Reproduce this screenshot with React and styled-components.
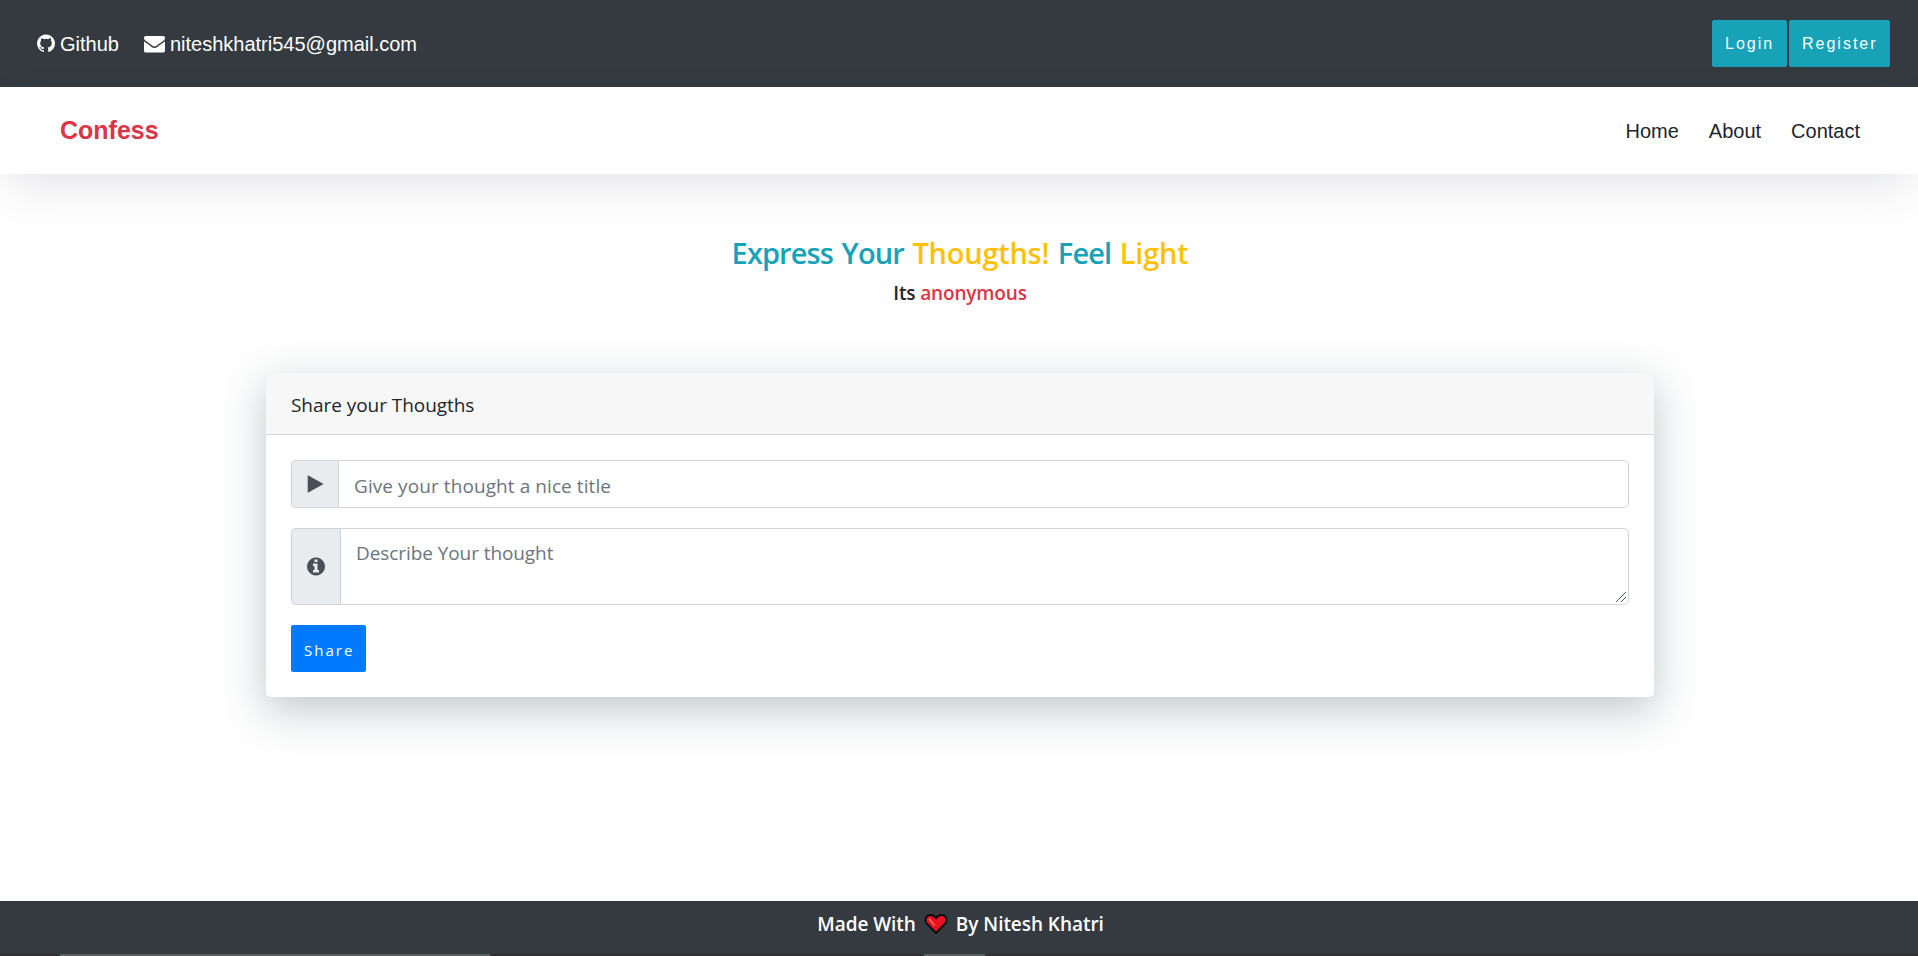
import React from 'react';
import styled, { createGlobalStyle } from 'styled-components';

const GlobalStyle = createGlobalStyle`
  *, *::before, *::after { box-sizing: border-box; }
  html { font-size: 20px; }
  body {
    margin: 0;
    background: #fefefe;
    color: #212529;
    font-family: 'Open Sans', sans-serif;
    line-height: 1.5;
    overflow: hidden;
  }
`;

const Page = styled.div`
  height: 956px;
  display: flex;
  flex-direction: column;
`;

const TopBar = styled.header`
  height: 87px;
  padding: 0 28px 0 37px;
  display: flex;
  align-items: center;
  justify-content: space-between;
  background: #343a40;
  font-family: 'Liberation Sans', sans-serif;
`;

const Contacts = styled.div`
  display: flex;
  gap: 25px;
`;

const ContactLink = styled.a`
  display: flex;
  align-items: center;
  gap: ${({ $gap }) => $gap}px;
  color: #fff;
  font-size: 20px;
`;

const Buttons = styled.div`
  display: flex;
  gap: 2px;
`;

const Button = styled.button`
  height: 47px;
  width: ${({ $width }) => $width}px;
  padding: ${({ $drop }) => $drop || 0}px 0 0 12px;
  border: 1px solid ${({ $color }) => $color};
  border-radius: 2px;
  background: ${({ $color }) => $color};
  color: #fff;
  font-family: inherit;
  font-size: ${({ $size }) => $size || 16}px;
  letter-spacing: 2px;
  text-align: left;
  white-space: nowrap;
`;

const NavBar = styled.nav`
  height: 87px;
  padding: 0 58px 0 60px;
  display: flex;
  align-items: center;
  justify-content: space-between;
  background: #fff;
  box-shadow: 0 16px 46px -8px rgba(60, 70, 85, 0.15);
  font-family: 'Liberation Sans', sans-serif;
`;

const Brand = styled.a`
  color: #dc3545;
  font-size: 25px;
  font-weight: 700;
`;

const NavLinks = styled.div`
  display: flex;
  gap: 30px;
  font-size: 20px;
`;

const Main = styled.main`
  flex: 1;
  padding-left: 2px;
  display: flex;
  flex-direction: column;
  align-items: center;
`;

const Tint = styled.span`
  color: ${({ $color }) => $color};
`;

const Title = styled.h1`
  margin: 61px 0 0;
  color: #17a2b8;
  font-size: 29px;
  font-weight: 600;
  line-height: 36px;
  letter-spacing: -0.9px;
  word-spacing: 2px;
  ${Tint} { letter-spacing: -0.25px; }
`;

const Subtitle = styled.h2`
  margin: 10px 0 0;
  font-size: 19px;
  font-weight: 600;
  line-height: 24px;
  letter-spacing: -0.15px;
`;

const Card = styled.section`
  width: 1388px;
  height: 324px;
  margin-top: 68px;
  border-radius: 5px;
  background: #fff;
  box-shadow: 0 13px 43px rgba(38, 65, 78, 0.29);
`;

const CardHeader = styled.div`
  height: 62px;
  padding: 3px 25px 0;
  display: flex;
  align-items: center;
  border-bottom: 1px solid #d8d8d8;
  border-radius: 5px 5px 0 0;
  background: #f7f7f7;
  font-size: 19px;
  letter-spacing: -0.05px;
`;

const Form = styled.form`
  padding: 25px;
  display: flex;
  flex-direction: column;
  align-items: flex-start;
`;

const Group = styled.div`
  position: relative;
  width: 100%;
  height: ${({ $height }) => $height}px;
  margin-bottom: 20px;
  display: flex;
`;

const Addon = styled.span`
  width: ${({ $width }) => $width}px;
  padding-left: 15px;
  display: flex;
  align-items: center;
  border: 1px solid #ced4da;
  border-right: 0;
  border-radius: 5px 0 0 5px;
  background: #e9ecef;
  color: #495057;
`;

const Field = styled.input`
  flex: 1;
  min-width: 0;
  padding: 9px 15px 5px;
  border: 1px solid #ced4da;
  border-radius: 0 5px 5px 0;
  background: #fff;
  font-family: inherit;
  font-size: 19px;
  line-height: 30px;
  letter-spacing: 0.08px;
  &::placeholder { color: #6c757d; opacity: 1; }
`;

const Area = styled(Field)`
  padding: 9px 15px 6px;
  letter-spacing: -0.08px;
  resize: none;
`;

const Grip = styled.svg`
  position: absolute;
  right: 3px;
  bottom: 3px;
`;

const Footer = styled.footer`
  height: 53px;
  padding: 0 0 7px 3px;
  display: flex;
  align-items: center;
  justify-content: center;
  gap: 8px;
  background: #343a40;
  color: #fff;
  font-size: 19px;
  font-weight: 600;
  letter-spacing: -0.05px;
`;

const BottomStrip = styled.div`
  height: 2px;
  padding-left: 60px;
  display: flex;
  gap: 434px;
  background: #322f33;
`;

const StripItem = styled.div`
  flex: none;
  width: ${({ $width }) => $width}px;
  background: #5d5e60;
`;

const Icon = ({ size = 20, left = 0, width = 1792, d }) => (
  <svg height={size} width={(size * width) / 1792} viewBox={`${left} 0 ${width} 1792`} fill="currentColor" aria-hidden="true">
    <path d={d} />
  </svg>
);

const icons = {
  github: 'M896 128q209 0 385.500 103t279.500 279.500 103 385.500q0 251-146.500 451.500t-378.500 277.500q-27 5-40-7t-13-30q0-3 .5-76.500t.5-134.500q0-97-52-142 57-6 102.500-18t94-39 81-66.500 53-105 20.500-150.500q0-119-79-206 37-91-8-204-28-9-81 11t-92 44l-38 24q-93-26-192-26t-192 26q-16-11-42.500-27t-83.500-38.500-85-13.500q-45 113-8 204-79 87-79 206 0 85 20.500 150t52.500 105 80.500 67 94 39 102.500 18q-39 36-49 103-21 10-45 15t-57 5-65.500-21.500-55.500-62.500q-19-32-48.500-52t-49.500-24l-20-3q-21 0-29 4.500t-5 11.500 9 14 13 12l7 5q22 10 43.500 38t31.500 51l10 23q13 38 44 61.500t67 30 69.500 7 55.500-3.500l23-4q0 38 .5 88.500t.5 54.500q0 18-13 30t-40 7q-232-77-378.500-277.500t-146.500-451.500q0-209 103-385.500t279.500-279.500 385.500-103z',
  envelope: 'M1792 710v794q0 66-47 113t-113 47h-1472q-66 0-113-47t-47-113v-794q44 49 101 87 362 246 497 345 57 42 92.500 65.500t94.500 48 110 24.500h2q51 0 110-24.500t94.500-48 92.500-65.500q170-123 498-345 57-39 100-87zm0-294q0 79-49 151t-122 123q-376 261-468 325-10 7-42.500 31t-54 38.500-52 32.500-57.500 27-50 9h-2q-23 0-50-9t-57.500-27-52-32.500-54-38.500-42.500-31q-91-64-262-182.500t-205-142.500q-62-42-117-115.500t-55-136.500q0-78 41.500-130t118.500-52h1472q65 0 112.500 47t47.500 113z',
  play: 'M1576 927l-1328 738q-23 13-39.500 3t-16.500-36v-1472q0-26 16.500-36t39.500 3l1328 738q23 13 23 31t-23 31z',
  info: 'M1152 1376v-160q0-14-9-23t-23-9h-96v-512q0-14-9-23t-23-9h-320q-14 0-23 9t-9 23v160q0 14 9 23t23 9h96v320h-96q-14 0-23 9t-9 23v160q0 14 9 23t23 9h448q14 0 23-9t9-23zm-128-896v-160q0-14-9-23t-23-9h-192q-14 0-23 9t-9 23v160q0 14 9 23t23 9h192q14 0 23-9t9-23zm640 416q0 209-103 385.500t-279.500 279.500-385.500 103-385.500-103-279.500-279.500-103-385.500 103-385.500 279.500-279.500 385.500-103 385.500 103 279.500 279.500 103 385.500z',
};

const Heart = () => (
  <svg width="24" height="22" viewBox="0 0 24 22">
    <path d="M12 20 2.7 10.3C.2 6.8 2.1 2 6.3 2 9 2 11 3.4 12 5.3 13 3.4 15 2 17.7 2c4.2 0 6.1 4.8 3.6 8.3Z" fill="#e81224" stroke="#080b0d" strokeWidth="1.9" strokeLinejoin="round" />
    <path d="m5.5 6.2 4.5 5.6" stroke="#f4694f" strokeWidth="1.8" strokeLinecap="round" />
  </svg>
);

export default function App() {
  return (
    <Page>
      <GlobalStyle />
      <TopBar>
        <Contacts>
          <ContactLink $gap={5}><Icon size={21} left={128} width={1536} d={icons.github} />Github</ContactLink>
          <ContactLink $gap={5}><Icon size={21} d={icons.envelope} />niteshkhatri545@gmail.com</ContactLink>
        </Contacts>
        <Buttons>
          <Button $color="#17a2b8" $width={75}>Login</Button>
          <Button $color="#17a2b8" $width={101}>Register</Button>
        </Buttons>
      </TopBar>
      <NavBar>
        <Brand>Confess</Brand>
        <NavLinks><a>Home</a><a>About</a><a>Contact</a></NavLinks>
      </NavBar>
      <Main>
        <Title>Express Your <Tint $color="#ffc107">Thougths!</Tint> Feel <Tint $color="#ffc107">Light</Tint></Title>
        <Subtitle>Its <Tint $color="#dc3545">anonymous</Tint></Subtitle>
        <Card>
          <CardHeader>Share your Thougths</CardHeader>
          <Form>
            <Group $height={48}>
              <Addon $width={47}><Icon size={20} left={128} width={1536} d={icons.play} /></Addon>
              <Field placeholder="Give your thought a nice title" />
            </Group>
            <Group $height={77}>
              <Addon $width={49}><Icon size={21} left={128} width={1536} d={icons.info} /></Addon>
              <Area as="textarea" placeholder="Describe Your thought" />
              <Grip width="10" height="10" viewBox="0 0 10 10" shapeRendering="crispEdges" stroke="#55585b" strokeWidth="1">
                <path d="M0 10 10 0M5 10l5-5" />
              </Grip>
            </Group>
            <Button type="button" $color="#007bff" $width={75} $drop={3} $size={15}>Share</Button>
          </Form>
        </Card>
      </Main>
      <Footer><span>Made With</span><Heart /><span>By Nitesh Khatri</span></Footer>
      <BottomStrip><StripItem $width={430} /><StripItem $width={61} /></BottomStrip>
    </Page>
  );
}
